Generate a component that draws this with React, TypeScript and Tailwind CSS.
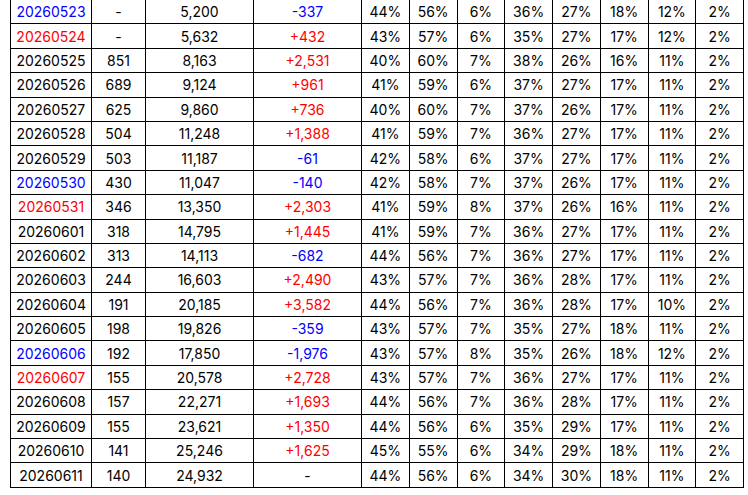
const rows: [string, string, string, string, number[], "b" | "r" | ""][] = [
  ["20260523", "-", "5,200", "-337", [44, 56, 6, 36, 27, 18, 12, 2], "b"],
  ["20260524", "-", "5,632", "+432", [43, 57, 6, 35, 27, 17, 12, 2], "r"],
  ["20260525", "851", "8,163", "+2,531", [40, 60, 7, 38, 26, 16, 11, 2], ""],
  ["20260526", "689", "9,124", "+961", [41, 59, 6, 37, 27, 17, 11, 2], ""],
  ["20260527", "625", "9,860", "+736", [40, 60, 7, 37, 26, 17, 11, 2], ""],
  ["20260528", "504", "11,248", "+1,388", [41, 59, 7, 36, 27, 17, 11, 2], ""],
  ["20260529", "503", "11,187", "-61", [42, 58, 6, 37, 27, 17, 11, 2], ""],
  ["20260530", "430", "11,047", "-140", [42, 58, 7, 37, 26, 17, 11, 2], "b"],
  ["20260531", "346", "13,350", "+2,303", [41, 59, 8, 37, 26, 16, 11, 2], "r"],
  ["20260601", "318", "14,795", "+1,445", [41, 59, 7, 36, 27, 17, 11, 2], ""],
  ["20260602", "313", "14,113", "-682", [44, 56, 7, 36, 27, 17, 11, 2], ""],
  ["20260603", "244", "16,603", "+2,490", [43, 57, 7, 36, 28, 17, 11, 2], ""],
  ["20260604", "191", "20,185", "+3,582", [44, 56, 7, 36, 28, 17, 10, 2], ""],
  ["20260605", "198", "19,826", "-359", [43, 57, 7, 35, 27, 18, 11, 2], ""],
  ["20260606", "192", "17,850", "-1,976", [43, 57, 8, 35, 26, 18, 12, 2], "b"],
  ["20260607", "155", "20,578", "+2,728", [43, 57, 7, 36, 27, 17, 11, 2], "r"],
  ["20260608", "157", "22,271", "+1,693", [44, 56, 7, 36, 28, 17, 11, 2], ""],
  ["20260609", "155", "23,621", "+1,350", [44, 56, 6, 35, 29, 17, 11, 2], ""],
  ["20260610", "141", "25,246", "+1,625", [45, 55, 6, 34, 29, 18, 11, 2], ""],
  ["20260611", "140", "24,932", "-", [44, 56, 6, 34, 30, 18, 11, 2], ""],
];

const tone = (c: "b" | "r" | "") =>
  c === "b" ? "text-[#0000ff]" : c === "r" ? "text-[#ff0000]" : "text-black";

const diffTone = (d: string) =>
  d.startsWith("+") ? "text-[#ff0000]" : d.startsWith("-") && d.length > 1 ? "text-[#0000ff]" : "text-black";

export default function App() {
  return (
    <div className="h-[495px] w-[748px] overflow-hidden bg-white font-['Inter',sans-serif] text-[14px]">
      <table className="ml-[10px] mt-[-1px] w-[733px] table-fixed border-collapse text-center">
        <colgroup>
          <col className="w-[81px]" />
          <col className="w-[54px]" />
          <col className="w-[108px]" />
          <col className="w-[108px]" />
          {Array.from({ length: 8 }).map((_, i) => (
            <col key={i} className="w-[47.75px]" />
          ))}
        </colgroup>
        <tbody>
          {rows.map(([date, a, b, diff, pct, c]) => (
            <tr key={date} className="h-[24.4px]">
              <td className={`border border-black p-0 ${tone(c)}`}>{date}</td>
              <td className="border border-black p-0 text-black">{a}</td>
              <td className="border border-black p-0 text-black">{b}</td>
              <td className={`border border-black p-0 ${diffTone(diff)}`}>{diff}</td>
              {pct.map((v, i) => (
                <td key={i} className="border border-black p-0 text-black">
                  {v}%
                </td>
              ))}
            </tr>
          ))}
        </tbody>
      </table>
    </div>
  );
}
